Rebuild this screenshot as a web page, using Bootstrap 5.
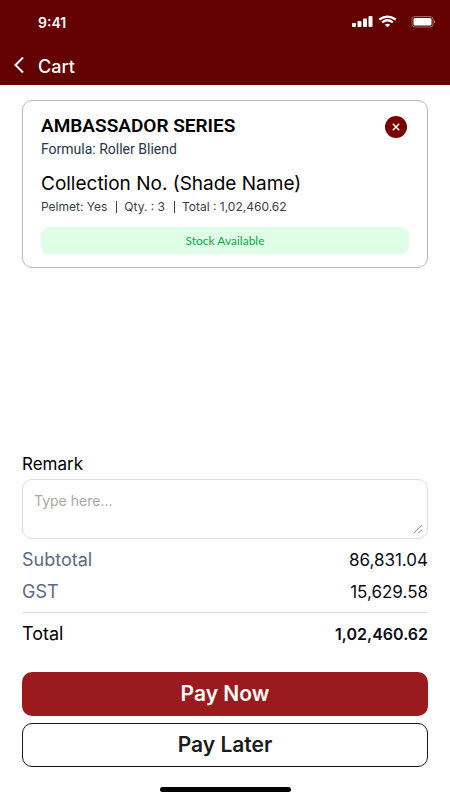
<!DOCTYPE html>
<html lang="en">
<head>
<meta charset="utf-8">
<meta name="viewport" content="width=device-width, initial-scale=1">
<title>Cart</title>
<link href="https://cdn.jsdelivr.net/npm/bootstrap@5.3.0/dist/css/bootstrap.min.css" rel="stylesheet">
<style>
body { font-family: Inter, "Liberation Sans", sans-serif; color: #000; background: #fff; }
.app-header { background: #630000; }
.status-bar { height: 44px; padding: 0 15px 0 38px; font-size: 14px; }
.title-bar { height: 41px; padding: 0 14px 0 13px; }
.title-bar h1 { font-size: 18px; line-height: 36px; }
.back-btn { line-height: 0; width: 25px; }
.screen { padding: 15px 22px 8px; }
.item-card { border: 1px solid #b9b9b9; border-radius: 10px; padding: 13px 18px; }
.series { font-family: Roboto, sans-serif; font-size: 19px; line-height: 24px; font-weight: 600; }
.formula { font-family: Roboto, sans-serif; font-size: 14px; line-height: 22px; color: #27364b; font-weight: 400; }
.collection { font-size: 19px; line-height: 26px; font-weight: 400; margin-top: 11px; }
.specs { font-size: 12px; line-height: 20px; color: #39404a; }
.specs li + li { border-left: 1px solid #39404a; margin-left: 9px; padding-left: 7px; line-height: 12px; }
.stock { font-family: Lato, sans-serif; font-size: 12px; line-height: 27px; background: #deffe5; color: #16a34a; border-radius: 8px; margin-top: 10px; }
.remove-btn { width: 22px; height: 22px; background: #7a0000; margin: 2px 2px 0 0; }
.remark-label { font-size: 17px; line-height: 22px; margin-bottom: 4px; }
.remark-box { height: 60px; border: 1px solid #dedcde; border-radius: 10px; padding: 9px 11px; font-size: 14px; line-height: 24px; resize: none; }
.remark-box::placeholder { color: #a9a9a9; }
.grip { right: 5px; bottom: 5px; pointer-events: none; }
.sums { font-size: 17px; line-height: 32px; margin-top: 5px; color: #0b0b18; }
.sums dt { color: #5a6a85; font-weight: 400; font-size: 18px; }
.sum-total { border-top: 1px solid #dfdfe8; margin-top: 4px; padding-top: 5px; }
.sums .sum-total dt { color: #000; }
.sum-total dd { font-weight: 600; font-size: 16px; }
.pay-btn { height: 44px; border-radius: 10px; font-size: 21px; line-height: 24px; font-weight: 600; padding: 0; }
.pay-now { background: #9b1a1d; color: #fff; }
.pay-later { border: 1px solid #151515; color: #1b1b1b; }
.pay-actions { margin-top: 22px; gap: 7px; }
.home-bar { width: 131px; height: 5px; margin: 20px auto 0; background: #000; }
</style>
<script src="https://cdn.jsdelivr.net/npm/bootstrap@5.3.0/dist/js/bootstrap.bundle.min.js"></script>
</head>
<body>
<div class="d-flex flex-column min-vh-100">
  <header class="app-header text-white">
    <div class="status-bar d-flex align-items-center justify-content-between">
      <span class="fw-semibold">9:41</span>
      <svg width="84" height="14" viewBox="0 0 84 14" fill="#fff" aria-hidden="true">
        <rect x="1" y="8" width="4" height="4" rx="1"/><rect x="6.500" y="6" width="4" height="6" rx="1"/><rect x="12" y="3.500" width="4" height="8.500" rx="1"/><rect x="17.500" y="1" width="4" height="11" rx="1"/>
        <path d="M36.500 12.200 33.800 9.700Q36.500 7.700 39.200 9.700Z"/>
        <path d="M31.200 7.300Q36.500 3.200 41.800 7.300M28.300 4.500Q36.500-1.400 44.700 4.500" fill="none" stroke="#fff" stroke-width="2.200"/>
        <rect x="61" y="1.500" width="21" height="10.500" rx="3" fill="none" stroke="#fff" stroke-opacity=".4"/>
        <rect x="62.500" y="3" width="18" height="7.500" rx="1.500"/>
        <path d="M83 5v3.500q1.200-.7 1.200-1.750T83 5" fill-opacity=".5"/>
      </svg>
    </div>
    <div class="title-bar d-flex align-items-center">
      <button type="button" class="back-btn btn p-0 border-0 text-start" aria-label="Back">
        <svg width="12" height="18" viewBox="0 0 12 18" fill="none" stroke="#fff" stroke-width="2"><path d="M10 1.500 2.500 9l7.500 7.500"/></svg>
      </button>
      <h1 class="m-0 fw-medium pt-1">Cart</h1>
    </div>
  </header>

  <main class="screen flex-grow-1 d-flex flex-column">
    <article class="item-card">
      <div class="d-flex justify-content-between align-items-start">
        <div>
          <h2 class="series m-0">AMBASSADOR SERIES</h2>
          <p class="formula m-0">Formula: Roller Bliend</p>
        </div>
        <button type="button" class="remove-btn btn rounded-circle border-0 p-0 d-flex align-items-center justify-content-center" aria-label="Remove item">
          <svg width="8" height="8" viewBox="0 0 8 8" stroke="#fff" stroke-width="1.500"><path d="m.8.800 6.400 6.400m0-6.400L.8 7.200"/></svg>
        </button>
      </div>
      <h3 class="collection mb-0">Collection No. (Shade Name)</h3>
      <ul class="specs list-unstyled m-0 d-flex align-items-center">
        <li>Pelmet: Yes</li>
        <li>Qty. : 3</li>
        <li>Total : 1,02,460.62</li>
      </ul>
      <div class="stock text-center">Stock Available</div>
    </article>

    <form class="mt-auto">
      <label for="remark" class="remark-label d-block">Remark</label>
      <div class="position-relative">
        <textarea id="remark" class="remark-box form-control" placeholder="Type here..."></textarea>
        <svg class="grip position-absolute" width="10" height="10" viewBox="0 0 10 10" stroke="#8f8f8f" aria-hidden="true"><path d="M1 9 9 1M5.500 9 9 5.500"/></svg>
      </div>
      <dl class="sums mb-0">
        <div class="d-flex justify-content-between"><dt>Subtotal</dt><dd class="m-0">86,831.04</dd></div>
        <div class="d-flex justify-content-between"><dt>GST</dt><dd class="m-0">15,629.58</dd></div>
        <div class="sum-total d-flex justify-content-between"><dt>Total</dt><dd class="m-0">1,02,460.62</dd></div>
      </dl>
      <div class="pay-actions d-grid">
        <button type="button" class="pay-btn pay-now btn">Pay Now</button>
        <button type="button" class="pay-btn pay-later btn">Pay Later</button>
      </div>
    </form>
    <div class="home-bar rounded-pill"></div>
  </main>
</div>
</body>
</html>
